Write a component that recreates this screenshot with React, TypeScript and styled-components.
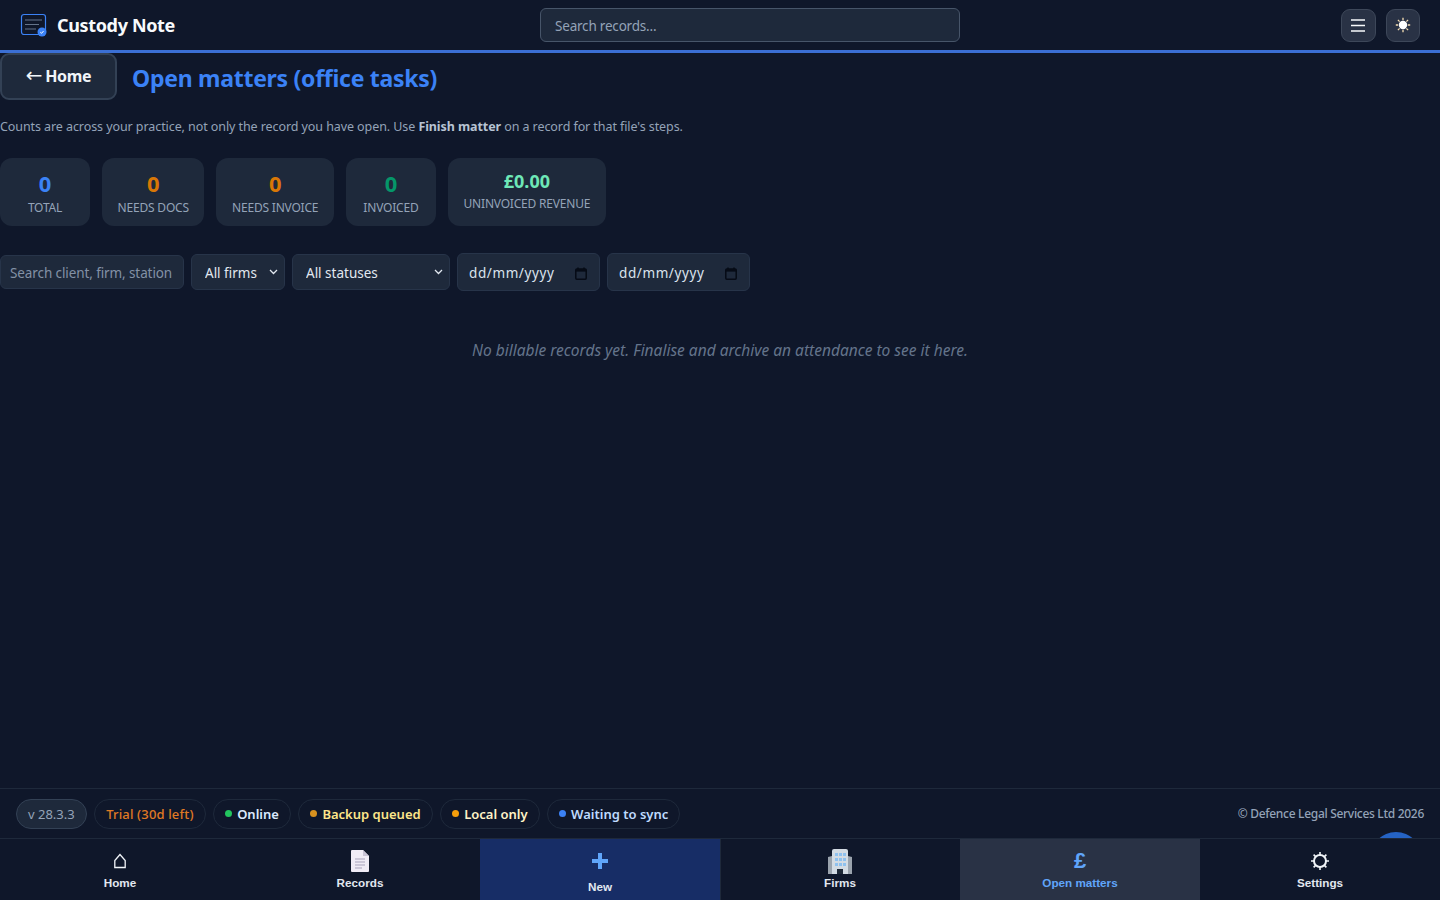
import React from "react";
import styled, { createGlobalStyle } from "styled-components";

const GlobalStyle = createGlobalStyle`
  html, body { margin: 0; padding: 0; height: 100%; background: #0f172a; }
  #root { height: 100%; }
  * { box-sizing: border-box; }
  body { font-family: "Noto Sans", "Open Sans", sans-serif; color: #f1f5f9; }
`;

const chevron = `url("data:image/svg+xml,%3Csvg xmlns='http://www.w3.org/2000/svg' width='9' height='6' viewBox='0 0 9 6' fill='none' stroke='%23e2e8f0' stroke-width='1.3'%3E%3Cpath d='M1 1l3.5 3.5L8 1'/%3E%3C/svg%3E")`;

const Page = styled.div`
  height: 100vh;
  display: flex;
  flex-direction: column;
  overflow: hidden;
  background: #0f172a;
  position: relative;
`;

const Header = styled.header`
  height: 53px;
  flex: none;
  display: grid;
  grid-template-columns: 520px 420px 1fr;
  align-items: center;
  padding: 0 20px;
  background: #0f172a;
  border-bottom: 3px solid #3b6fd4;
`;

const Brand = styled.div`
  display: flex;
  align-items: center;
  gap: 9px;
  font-size: 18px;
  font-weight: 700;
  letter-spacing: -0.35px;
  color: #f8fafc;
`;

const SearchBox = styled.input`
  height: 34px;
  width: 100%;
  padding: 2px 14px 0;
  background: #1e293b;
  border: 1px solid #475569;
  border-radius: 6px;
  color: #f1f5f9;
  font: 400 13.5px "Noto Sans", sans-serif;
  letter-spacing: -0.2px;
  outline: none;
  &::placeholder { color: #94a3b8; opacity: 1; }
`;

const HeaderActions = styled.div`
  display: flex;
  justify-content: flex-end;
  gap: 10px;
`;

const IconButton = styled.button`
  width: 34.5px;
  height: 33px;
  display: flex;
  align-items: center;
  justify-content: center;
  padding: 0;
  background: #293245;
  border: 1px solid #3d4759;
  border-radius: 9px;
  color: #f8fafc;
`;

const Main = styled.main`
  flex: 1;
  min-height: 0;
`;

const TitleRow = styled.div`
  display: flex;
  align-items: center;
  gap: 15px;
`;

const BackButton = styled.button`
  width: 117px;
  height: 47px;
  padding: 0 0 1px;
  background: #1e293b;
  border: 2px solid #334155;
  border-radius: 9px;
  color: #f1f5f9;
  font: 700 16px "Noto Sans", sans-serif;
  letter-spacing: -0.35px;
`;

const BackArrow = styled.span`
  font-family: "DejaVu Sans", sans-serif;
  font-weight: 400;
  font-size: 20px;
  line-height: 1;
  margin-right: 3px;
`;

const Title = styled.h1`
  margin: 5px 0 0;
  font-size: 23px;
  font-weight: 700;
  letter-spacing: -0.27px;
  color: #3b82f6;
  line-height: 1.3;
`;

const Intro = styled.p`
  margin: 18px 0 0;
  font-size: 12.5px;
  line-height: 17px;
  letter-spacing: -0.08px;
  color: #94a3b8;
  b { color: #b8c4d4; font-weight: 700; }
`;

const Stats = styled.div`
  display: flex;
  gap: 12px;
  margin-top: 23px;
`;

const StatCard = styled.div`
  min-width: 90px;
  height: 68px;
  padding: 0 15.6px;
  display: flex;
  flex-direction: column;
  align-items: center;
  justify-content: center;
  background: #1e293b;
  border-radius: 12px;
`;

const StatValue = styled.div<{ $color: string; $small?: boolean }>`
  font-size: ${(p) => (p.$small ? "18px" : "22px")};
  line-height: ${(p) => (p.$small ? "25px" : "30px")};
  font-weight: 700;
  color: ${(p) => p.$color};
`;

const StatLabel = styled.div<{ $small?: boolean }>`
  font-size: 12px;
  line-height: 16px;
  letter-spacing: -0.2px;
  margin-top: 2px;
  margin-bottom: ${(p) => (p.$small ? "4px" : "0")};
  color: #94a3b8;
  white-space: nowrap;
`;

const Filters = styled.div`
  display: flex;
  align-items: center;
  gap: 7px;
  margin-top: 27px;
`;

const FilterInput = styled.input`
  width: 184px;
  height: 34px;
  padding: 2px 9px 0;
  background: #1e293b;
  border: 1px solid #273449;
  border-radius: 6px;
  color: #f1f5f9;
  font: 400 13.5px "Noto Sans", sans-serif;
  letter-spacing: -0.1px;
  outline: none;
  &::placeholder { color: #8391a6; opacity: 1; }
`;

const FilterSelect = styled.select<{ $width: number }>`
  width: ${(p) => p.$width}px;
  height: 36px;
  padding: 2px 9px 0 13px;
  appearance: none;
  background: #1e293b ${chevron} no-repeat right 6px center;
  border: 1px solid #273449;
  border-radius: 6px;
  color: #e2e8f0;
  font: 400 13.5px "Noto Sans", sans-serif;
  outline: none;
`;

const DateField = styled.div`
  width: 143px;
  height: 38px;
  padding: 2px 12px 0 11px;
  display: flex;
  align-items: center;
  justify-content: space-between;
  background: #1e293b;
  border: 1px solid #273449;
  border-radius: 6px;
  color: #dbe4ef;
  font-size: 13.5px;
  letter-spacing: 0.6px;
`;

const EmptyNote = styled.p`
  margin: 49px 0 0;
  text-align: center;
  font-size: 15.5px;
  font-style: italic;
  line-height: 20px;
  color: #64748b;
`;

const StatusBar = styled.div`
  height: 50px;
  flex: none;
  display: flex;
  align-items: center;
  justify-content: space-between;
  padding: 0 16px;
  background: #0f172a;
  border-top: 1px solid #1e293b;
`;

const Pills = styled.div`
  display: flex;
  gap: 7.5px;
`;

const Pill = styled.div<{ $color: string; $filled?: boolean; $medium?: boolean }>`
  height: 30px;
  padding: 0 11px;
  display: flex;
  align-items: center;
  gap: 5px;
  border: 1px solid ${(p) => (p.$filled ? "#334155" : "#1e293b")};
  border-radius: 15px;
  background: ${(p) => (p.$filled ? "#1e293b" : "transparent")};
  color: ${(p) => p.$color};
  font-size: 13px;
  font-weight: ${(p) => (p.$filled ? 400 : p.$medium ? 500 : 600)};
  letter-spacing: ${(p) => (p.$medium ? "0.15px" : "0")};
  white-space: nowrap;
`;

const Dot = styled.span<{ $color: string }>`
  width: 7px;
  height: 7px;
  border-radius: 50%;
  background: ${(p) => p.$color};
`;

const Copyright = styled.div`
  font-size: 12px;
  font-weight: 500;
  letter-spacing: -0.3px;
  color: #94a3b8;
`;

const Nav = styled.nav`
  height: 62px;
  flex: none;
  display: grid;
  grid-template-columns: repeat(6, 1fr);
  background: #0f172a;
  border-top: 1px solid #1e293b;
  position: relative;
  z-index: 1;
`;

const NavItem = styled.a<{ $active?: boolean; $primary?: boolean }>`
  display: flex;
  flex-direction: column;
  align-items: center;
  justify-content: flex-start;
  padding-top: ${(p) => (p.$primary ? "7px" : "9px")};
  background: ${(p) => (p.$primary ? "#172d66" : p.$active ? "#293245" : "transparent")};
  box-shadow: ${(p) => (p.$primary ? "1px 0 0 #1e293b" : "none")};
  color: ${(p) => (p.$active ? "#60a5fa" : "#e2e8f0")};
  font: 700 11.7px "Liberation Sans", Arial, sans-serif;
`;

const NavIcon = styled.span<{ $primary?: boolean }>`
  height: ${(p) => (p.$primary ? "29px" : "26px")};
  display: flex;
  align-items: center;
  justify-content: center;
  font-size: 22px;
  line-height: 1;
`;

const NavLabel = styled.span<{ $primary?: boolean }>`
  margin-top: ${(p) => (p.$primary ? "5px" : "2px")};
  line-height: 13px;
`;

const ChatBubble = styled.div`
  position: absolute;
  right: 18px;
  bottom: 16px;
  width: 52px;
  height: 52px;
  border-radius: 50%;
  background: #2563c4;
`;

const LogoIcon = () => (
  <svg width="28" height="24" viewBox="0 0 28 24" fill="none">
    <rect x="1.5" y="1.5" width="24" height="20" rx="2.5" stroke="#3b82f6" strokeWidth="1.2" />
    <path d="M5 7h17M5 11.5h14M5 16h11" stroke="#64748b" strokeWidth="1.2" />
    <circle cx="22" cy="19" r="4.5" fill="#3b82f6" />
    <path d="M20.3 19.2l1.2 1.1 2-2.2" stroke="#fff" strokeWidth="1" />
  </svg>
);

const CalendarIcon = () => (
  <svg width="12" height="13" viewBox="0 0 12 13" fill="none">
    <path d="M3 0.5v2M9 0.5v2" stroke="#060b16" strokeWidth="1.5" />
    <rect x="0.8" y="2" width="10.4" height="10.2" rx="1" stroke="#060b16" strokeWidth="1.5" />
    <rect x="0.8" y="2" width="10.4" height="2.6" fill="#060b16" />
  </svg>
);

const MenuIcon = () => (
  <svg width="14" height="13" viewBox="0 0 14 13" fill="none" stroke="#f8fafc" strokeWidth="1.6">
    <path d="M0 1h14M0 6.5h14M0 12h14" />
  </svg>
);

const SunIcon = () => (
  <svg width="16" height="16" viewBox="0 0 16 16" fill="none">
    <path
      d="M8 0.8v2.4M8 12.8v2.4M0.8 8h2.4M12.8 8h2.4M2.9 2.9l1.7 1.7M11.4 11.4l1.7 1.7M2.9 13.1l1.7-1.7M11.4 4.6l1.7-1.7"
      stroke="#f5deb3"
      strokeWidth="1.3"
    />
    <circle cx="8" cy="8" r="4.2" fill="#fff" />
  </svg>
);

const HomeIcon = () => (
  <svg width="14" height="16" viewBox="0 0 14 16" fill="none" stroke="#f1f5f9" strokeWidth="1.3">
    <path d="M7 1.5L1.8 7.5v7h10.4v-7z" />
  </svg>
);

const RecordsIcon = () => (
  <svg width="20" height="24" viewBox="0 0 20 24">
    <path d="M1 2a1 1 0 011-1h11l6 6v15a1 1 0 01-1 1H2a1 1 0 01-1-1z" fill="#f0ecf6" />
    <path d="M13 1l6 6h-6z" fill="#c9c4d6" />
    <path d="M5 10h10M5 13h10M5 16h10M5 19h7" stroke="#a8a3bb" strokeWidth="1" />
  </svg>
);

const FirmsIcon = () => (
  <svg width="24" height="25" viewBox="0 0 24 25">
    <path d="M0 8l4-1v18H0z" fill="#9aa3ad" />
    <path d="M20 7l4 1v17h-4z" fill="#9aa3ad" />
    <path d="M4 2a2 2 0 012-2h12a2 2 0 012 2v23H4z" fill="#d3dbe3" />
    <g fill="#8fc1ee">
      <rect x="7" y="4" width="3" height="3" />
      <rect x="11" y="4" width="3" height="3" />
      <rect x="15" y="4" width="3" height="3" />
      <rect x="7" y="9" width="3" height="3" />
      <rect x="11" y="9" width="3" height="3" />
      <rect x="15" y="9" width="3" height="3" />
      <rect x="7" y="14" width="3" height="3" />
      <rect x="11" y="14" width="3" height="3" />
      <rect x="15" y="14" width="3" height="3" />
    </g>
    <rect x="9" y="20" width="6" height="5" fill="#1f2937" />
  </svg>
);

const GearIcon = () => (
  <svg width="20" height="20" viewBox="0 0 20 20" fill="none">
    <circle cx="10" cy="10" r="6" stroke="#f1f5f9" strokeWidth="2" />
    <path
      d="M10 1v3M10 16v3M1 10h3M16 10h3M3.6 3.6l2 2M14.4 14.4l2 2M3.6 16.4l2-2M14.4 5.6l2-2"
      stroke="#f1f5f9"
      strokeWidth="1.6"
    />
  </svg>
);

const stats = [
  { label: "TOTAL", value: "0", color: "#3b82f6" },
  { label: "NEEDS DOCS", value: "0", color: "#d97706" },
  { label: "NEEDS INVOICE", value: "0", color: "#d97706" },
  { label: "INVOICED", value: "0", color: "#059669" },
  { label: "UNINVOICED REVENUE", value: "£0.00", color: "#6ee7b7", small: true },
];

const statuses = [
  { label: "Online", dot: "#22c55e", color: "#dbeafe" },
  { label: "Backup queued", dot: "#d8921f", color: "#fde68a" },
  { label: "Local only", dot: "#f59e0b", color: "#fef3c7" },
  { label: "Waiting to sync", dot: "#3b82f6", color: "#bfdbfe" },
];

export default function App() {
  return (
    <Page>
      <GlobalStyle />
      <Header>
        <Brand>
          <LogoIcon />
          Custody Note
        </Brand>
        <SearchBox placeholder="Search records..." />
        <HeaderActions>
          <IconButton><MenuIcon /></IconButton>
          <IconButton><SunIcon /></IconButton>
        </HeaderActions>
      </Header>

      <Main>
        <TitleRow>
          <BackButton><BackArrow>←</BackArrow>Home</BackButton>
          <Title>Open matters (office tasks)</Title>
        </TitleRow>
        <Intro>
          Counts are across your practice, not only the record you have open. Use <b>Finish matter</b> on a record for that file's steps.
        </Intro>
        <Stats>
          {stats.map((s) => (
            <StatCard key={s.label}>
              <StatValue $color={s.color} $small={s.small}>{s.value}</StatValue>
              <StatLabel $small={s.small}>{s.label}</StatLabel>
            </StatCard>
          ))}
        </Stats>
        <Filters>
          <FilterInput placeholder="Search client, firm, station" />
          <FilterSelect $width={94}><option>All firms</option></FilterSelect>
          <FilterSelect $width={158}><option>All statuses</option></FilterSelect>
          <DateField>dd/mm/yyyy <CalendarIcon /></DateField>
          <DateField>dd/mm/yyyy <CalendarIcon /></DateField>
        </Filters>
        <EmptyNote>No billable records yet. Finalise and archive an attendance to see it here.</EmptyNote>
      </Main>

      <StatusBar>
        <Pills>
          <Pill $color="#94a3b8" $filled>v 28.3.3</Pill>
          <Pill $color="#e07a24" $medium>Trial (30d left)</Pill>
          {statuses.map((s) => (
            <Pill key={s.label} $color={s.color}>
              <Dot $color={s.dot} />
              {s.label}
            </Pill>
          ))}
        </Pills>
        <Copyright>© Defence Legal Services Ltd 2026</Copyright>
      </StatusBar>

      <ChatBubble />

      <Nav>
        <NavItem><NavIcon><HomeIcon /></NavIcon><NavLabel>Home</NavLabel></NavItem>
        <NavItem><NavIcon><RecordsIcon /></NavIcon><NavLabel>Records</NavLabel></NavItem>
        <NavItem $primary>
          <NavIcon $primary>
            <svg width="16" height="16" viewBox="0 0 16 16"><path d="M6 0h4v6h6v4h-6v6H6v-6H0V6h6z" fill="#60a5fa" /></svg>
          </NavIcon>
          <NavLabel $primary>New</NavLabel>
        </NavItem>
        <NavItem><NavIcon><FirmsIcon /></NavIcon><NavLabel>Firms</NavLabel></NavItem>
        <NavItem $active>
          <NavIcon>£</NavIcon>
          <NavLabel>Open matters</NavLabel>
        </NavItem>
        <NavItem><NavIcon><GearIcon /></NavIcon><NavLabel>Settings</NavLabel></NavItem>
      </Nav>
    </Page>
  );
}
